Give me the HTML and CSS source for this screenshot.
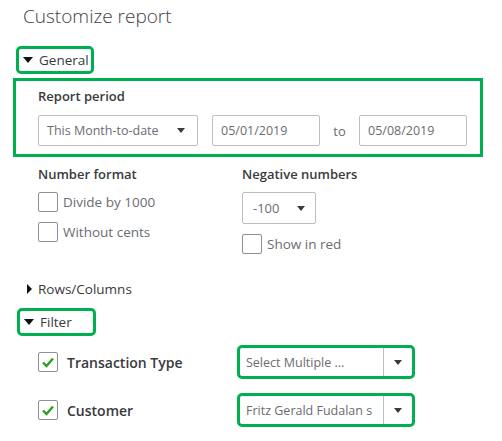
FILE: index.html
```html
<!DOCTYPE html>
<html lang="en">
<head>
    <meta charset="UTF-8">
    <title>Customize report</title>
    <link rel="stylesheet" href="styles.css">
</head>
<body>
    <div class="panel">
        <h1 class="title">Customize report</h1>

        <div class="toggle toggle-general marked">
            <span class="caret down"></span>General
        </div>

        <div class="period marked-box">
            <div class="label">Report period</div>
            <div class="period-row">
                <div class="select select-period">This Month-to-date <span class="caret down small"></span></div>
                <div class="field">05/01/2019</div>
                <span class="to">to</span>
                <div class="field">05/08/2019</div>
            </div>
        </div>

        <div class="numbers">
            <div class="col col-left">
                <div class="label">Number format</div>
                <label class="check first"><span class="box"></span>Divide by 1000</label>
                <label class="check"><span class="box"></span>Without cents</label>
            </div>
            <div class="col col-right">
                <div class="label">Negative numbers</div>
                <div class="select select-neg">-100 <span class="caret down small"></span></div>
                <label class="check"><span class="box"></span>Show in red</label>
            </div>
        </div>

        <div class="toggle toggle-rows">
            <span class="caret right"></span>Rows/Columns
        </div>

        <div class="toggle toggle-filter marked">
            <span class="caret down"></span>Filter
        </div>

        <div class="filter-row first-filter">
            <div class="filter-name"><span class="box checked"><svg width="14" height="12" viewBox="0 0 14 12"><path d="M2 6.5 L5.5 10 L12 2.5" fill="none" stroke="#2ca01c" stroke-width="2.4"/></svg></span>Transaction Type</div>
            <div class="combo marked"><span class="combo-text">Select Multiple ...</span><span class="combo-btn"><span class="caret down small"></span></span></div>
        </div>

        <div class="filter-row">
            <div class="filter-name"><span class="box checked"><svg width="14" height="12" viewBox="0 0 14 12"><path d="M2 6.5 L5.5 10 L12 2.5" fill="none" stroke="#2ca01c" stroke-width="2.4"/></svg></span>Customer</div>
            <div class="combo marked"><span class="combo-text">Fritz Gerald Fudalan s</span><span class="combo-btn"><span class="caret down small"></span></span></div>
        </div>
    </div>
</body>
</html>
```

FILE: styles.css
```css
body {
    margin: 0;
    background: #fff;
    font-family: "Open Sans", "Lato", sans-serif;
    color: #393a3d;
}
.panel {
    width: 502px;
    height: 441px;
    overflow: hidden;
}
.title {
    margin: 0;
    padding: 3px 0 0 23px;
    height: 38px;
    box-sizing: border-box;
    font-size: 19px;
    font-weight: 300;
    line-height: 26px;
    color: #404145;
}
.marked {
    border: 3px solid #00b050;
    border-radius: 5px;
}
.toggle {
    display: flex;
    align-items: center;
    font-size: 13.5px;
    color: #393a3d;
    box-sizing: border-box;
}
.toggle-general {
    margin: 8px 0 0 16px;
    width: 78px;
    height: 28px;
    padding-left: 4px;
}
.caret {
    display: inline-block;
    width: 0;
    height: 0;
}
.caret.down {
    border-left: 5px solid transparent;
    border-right: 5px solid transparent;
    border-top: 6px solid #111;
    margin-right: 6px;
}
.caret.down.small {
    border-left-width: 4.5px;
    border-right-width: 4.5px;
    border-top-width: 5px;
    border-top-color: #393a3d;
    margin: 0;
}
.caret.right {
    border-top: 5px solid transparent;
    border-bottom: 5px solid transparent;
    border-left: 5px solid #111;
    margin-right: 6px;
}
.marked-box {
    border: 3px solid #00b050;
}
.period {
    margin: 4px 0 0 13px;
    width: 470px;
    height: 79px;
    box-sizing: border-box;
    padding: 6px 0 0 22px;
}
.label {
    font-size: 13px;
    font-weight: 600;
    line-height: 18px;
    color: #393a3d;
}
.period-row {
    display: flex;
    align-items: center;
    margin-top: 10px;
}
.select, .field {
    box-sizing: border-box;
    border: 1px solid #babec5;
    border-radius: 2px;
    height: 31px;
    font-size: 12.5px;
    color: #6b6c72;
    display: flex;
    align-items: center;
    padding: 0 8px;
}
.select {
    justify-content: space-between;
}
.select-period {
    width: 160px;
    padding-right: 12px;
}
.field {
    width: 108px;
}
.select-period + .field {
    margin-left: 14px;
}
.to {
    width: 39px;
    text-align: center;
    font-size: 13px;
    color: #6b6c72;
}
.numbers {
    display: flex;
    padding-left: 38px;
    margin-top: 8px;
    height: 115px;
}
.col-left {
    width: 204px;
}
.check {
    display: flex;
    align-items: center;
    font-size: 13.5px;
    color: #6b6c72;
    height: 20px;
}
.check.first {
    margin-top: 9px;
}
.check + .check {
    margin-top: 10px;
}
.box {
    box-sizing: border-box;
    width: 20px;
    height: 20px;
    border: 1px solid #8d9096;
    border-radius: 2px;
    margin-right: 5px;
    display: flex;
    align-items: center;
    justify-content: center;
    background: #fff;
}
.select-neg {
    width: 74px;
    height: 32px;
    margin-top: 9px;
    padding: 0 10px;
    font-size: 13px;
}
.select-neg + .check {
    margin-top: 10px;
}
.toggle-rows {
    margin-left: 27px;
    height: 18px;
}
.toggle-filter {
    margin: 10px 0 0 17px;
    width: 79px;
    height: 28px;
    padding-left: 4px;
}
.filter-row {
    display: flex;
    align-items: center;
    margin-top: 14px;
    height: 34px;
}
.first-filter {
    margin-top: 9px;
}
.filter-name {
    display: flex;
    align-items: center;
    width: 199px;
    padding-left: 38px;
    font-size: 14px;
    font-weight: 600;
    color: #393a3d;
}
.filter-name .box {
    margin-right: 9px;
}
.combo {
    box-sizing: border-box;
    width: 178px;
    height: 34px;
    display: flex;
    align-items: stretch;
    font-size: 12.5px;
    color: #6b6c72;
}
.combo-text {
    flex: 1;
    display: flex;
    align-items: center;
    padding-left: 6px;
    white-space: nowrap;
    overflow: hidden;
    border-right: 1px solid #babec5;
}
.combo-btn {
    width: 28px;
    display: flex;
    align-items: center;
    justify-content: center;
}
```
